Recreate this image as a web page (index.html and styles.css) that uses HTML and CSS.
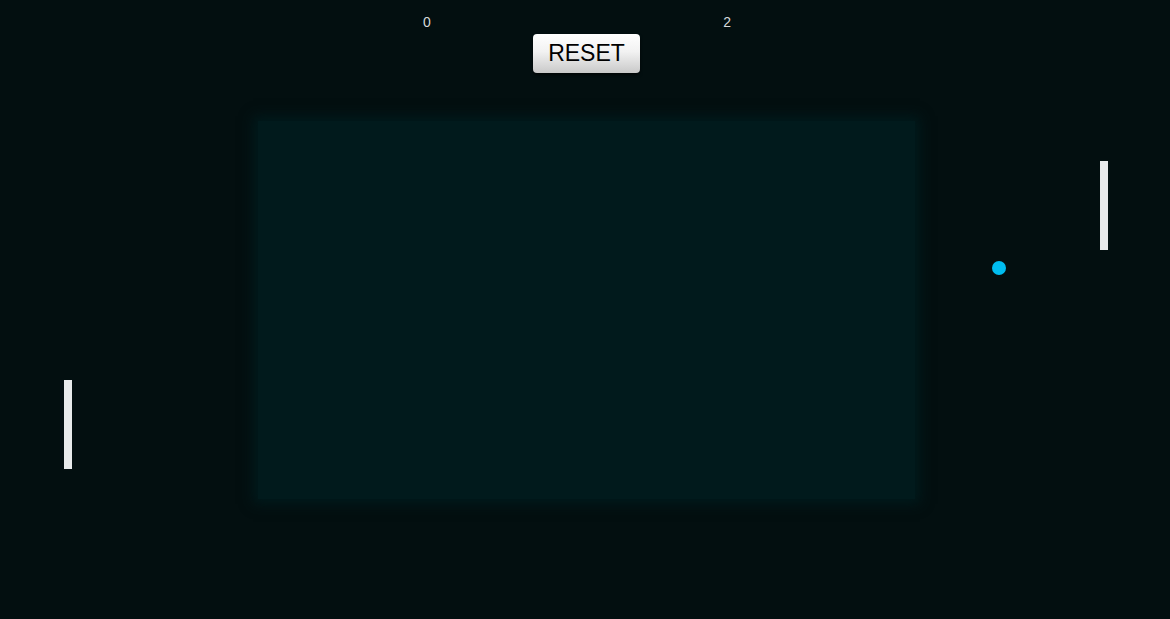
FILE: index.html
```html
<!DOCTYPE html>
<html>
<head>
<meta charset="utf-8">
<link rel="stylesheet" href="styles.css">
</head>
<body>
<div class="stage">
  <header class="top">
    <div class="scores">
      <span class="score">0</span>
      <span class="score">2</span>
    </div>
    <button class="reset">RESET</button>
  </header>
  <div class="field"></div>
  <div class="paddle paddle-left"></div>
  <div class="paddle paddle-right"></div>
  <div class="ball"></div>
</div>
</body>
</html>
```
FILE: styles.css
```css
html, body {
  margin: 0;
  padding: 0;
  background: #030f10;
  width: 1170px;
  height: 619px;
  overflow: hidden;
  font-family: "Liberation Sans", Arial, sans-serif;
}
.stage {
  position: relative;
  width: 1170px;
  height: 619px;
}
.top {
  display: flex;
  flex-direction: column;
  align-items: center;
  padding-top: 14px;
}
.scores {
  display: flex;
  width: 308px;
  justify-content: space-between;
  padding-left: 8px;
  font-size: 14px;
  line-height: 16px;
  color: #d6d9da;
  margin-left: -24px;
}
.reset {
  margin-top: 4px;
  margin-left: 3px;
  width: 107px;
  height: 39px;
  border: none;
  border-radius: 4px;
  background: linear-gradient(#ffffff 0%, #f2f2f2 45%, #c9c9c9 100%);
  box-shadow: 0 2px 3px rgba(0,0,0,0.6);
  font-family: "Liberation Sans", Arial, sans-serif;
  font-size: 23px;
  color: #000;
  padding: 0;
  line-height: 39px;
}
.field {
  margin: 48px 0 0 258px;
  width: 657px;
  height: 378px;
  background: #011a1c;
  box-shadow: 0 0 12px 5px #011a1c;
}
.paddle {
  position: absolute;
  width: 8px;
  height: 89px;
  background: #e8eaeb;
}
.paddle-left { left: 64px; top: 380px; }
.paddle-right { left: 1100px; top: 161px; }
.ball {
  position: absolute;
  left: 992px;
  top: 261px;
  width: 14px;
  height: 14px;
  border-radius: 50%;
  background: #00bdf0;
}
```
